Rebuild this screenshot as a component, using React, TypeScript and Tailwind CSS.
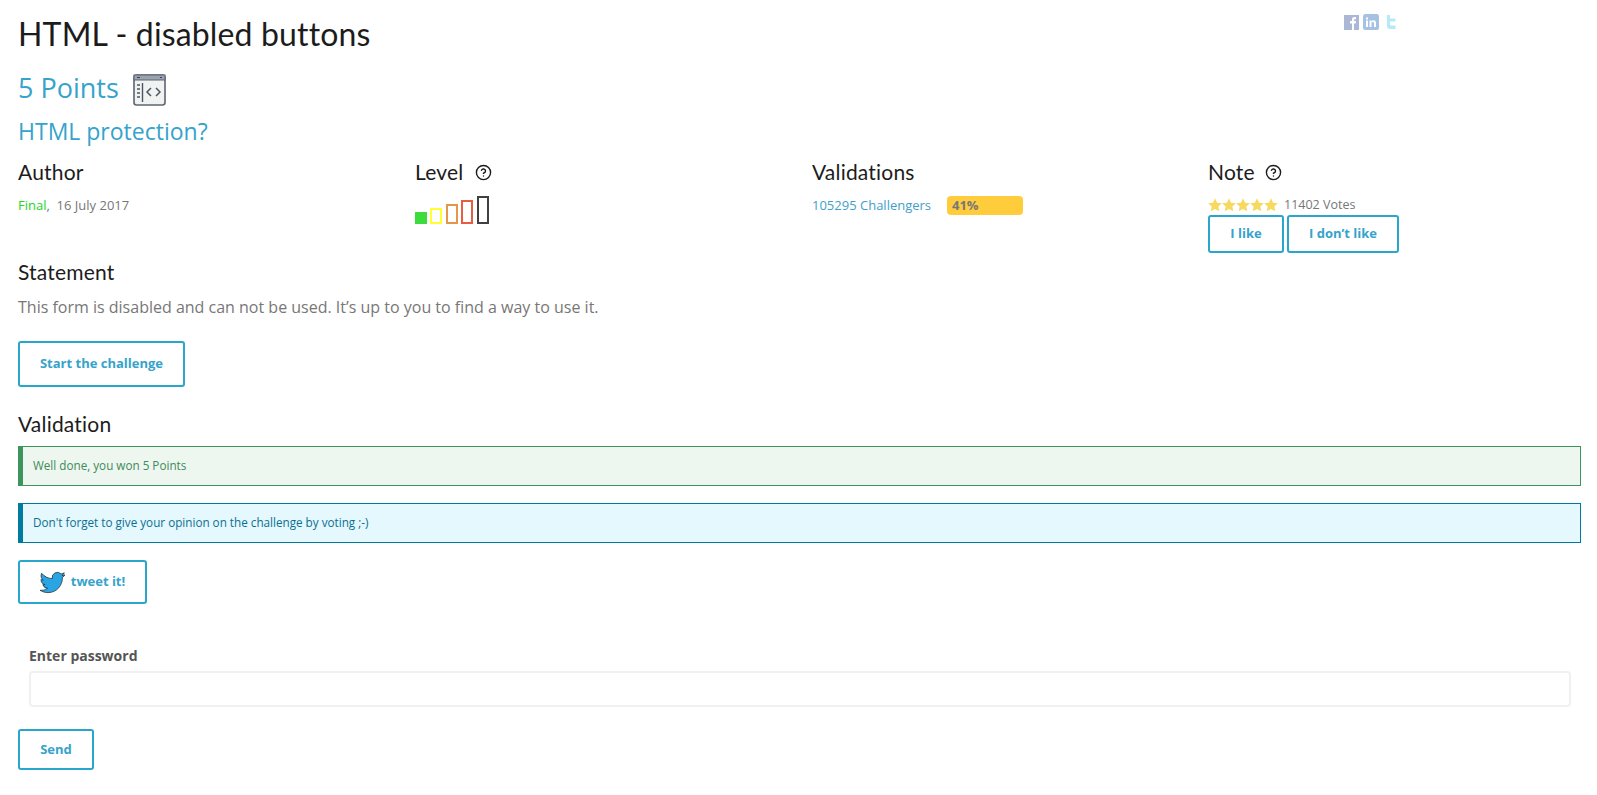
import { CircleHelp } from 'lucide-react';

const twitterPath =
  'M23.95 4.57a10 10 0 0 1-2.82.77 4.96 4.96 0 0 0 2.16-2.72 9.9 9.9 0 0 1-3.12 1.18 4.92 4.92 0 0 0-8.38 4.48A13.98 13.98 0 0 1 1.64 3.16a4.92 4.92 0 0 0 1.52 6.57 4.9 4.9 0 0 1-2.23-.61v.06a4.92 4.92 0 0 0 3.95 4.83 5 5 0 0 1-2.21.08 4.94 4.94 0 0 0 4.6 3.42A9.87 9.87 0 0 1 0 19.54a13.94 13.94 0 0 0 7.55 2.21c9.05 0 14-7.5 14-13.98 0-.21 0-.42-.02-.63a9.94 9.94 0 0 0 2.46-2.55z';

function OutlineButton({ children, className }: { children: React.ReactNode; className: string }) {
  return (
    <button
      className={`flex items-center justify-center rounded-[3px] border-2 border-[#28a6cc] bg-white text-[13px] font-bold text-[#35a3cb] ${className}`}
    >
      {children}
    </button>
  );
}

function SectionTitle({ children, className = '' }: { children: React.ReactNode; className?: string }) {
  return (
    <h3 className={`font-['Lato',sans-serif] text-[21px] leading-[28px] tracking-[0.2px] text-[#1c1c1c] ${className}`}>
      {children}
    </h3>
  );
}

function ChallengeIcon() {
  return (
    <svg width="33" height="32" viewBox="0 0 33 32" className="ml-[14px] mt-[3px]">
      <rect x="1" y="1" width="31" height="30" rx="2.5" fill="#f1f3f2" stroke="#5c6570" strokeWidth="1.6" />
      <rect x="1" y="1" width="31" height="5" fill="#9aa3ad" stroke="#5c6570" strokeWidth="1" />
      <path d="M4 3.5h3M27 3.5h2" stroke="#3c4450" strokeWidth="1" />
      <path d="M9.5 9v19" stroke="#4c5560" strokeWidth="1.4" />
      <path d="M4 11h3M4 15h3M4 19h3M4 23h3" stroke="#4c5560" strokeWidth="1.4" />
      <path d="M18 14l-4 4 4 4M23 14l4 4-4 4" fill="none" stroke="#4c5560" strokeWidth="1.5" />
    </svg>
  );
}

function SocialIcons() {
  return (
    <div className="mr-[198px] mt-[14px] flex h-[16px] items-center gap-[4px]">
      <svg width="15" height="15" viewBox="0 0 15 15" className="opacity-50">
        <rect width="15" height="15" fill="#5a72ab" />
        <path d="M8 15V8.5H6V6h2V4.5C8 2.800 9 2 10.500 2H12v2.300h-1c-.7 0-1 .3-1 1V6h2l-.3 2.500H10V15z" fill="#fff" />
      </svg>
      <svg width="16" height="16" viewBox="0 0 16 16" className="opacity-50">
        <rect width="16" height="16" rx="2.500" fill="#4f86c6" />
        <path d="M3 6.500h2V13H3zM3 3.500h2v2H3zM6.500 6.500h2v1c.5-.8 1.200-1.200 2.200-1.200C12.300 6.300 13 7.300 13 9v4h-2V9.500c0-1-.3-1.500-1.100-1.500-.9 0-1.400.6-1.400 1.600V13h-2z" fill="#fff" />
      </svg>
      <svg width="16" height="16" viewBox="0 0 16 16" className="opacity-50">
        <path d="M4 1h3v3.500h5.500v3H7V10c0 1 .5 1.500 1.500 1.500h4V15H7c-2 0-3-1.500-3-3.500z" fill="#6fd6f5" />
      </svg>
    </div>
  );
}

function LevelBars() {
  return (
    <div className="flex items-end pt-[10px]">
      <div className="h-[12px] w-[12px] bg-[#3ddc3d]" />
      <div className="ml-[3px] h-[16px] w-[12px] border-2 border-[#ffff33]" />
      <div className="ml-[4px] h-[20px] w-[12px] border-2 border-[#e6964a]" />
      <div className="ml-[3px] h-[24px] w-[12px] border-2 border-[#e65c45]" />
      <div className="ml-[4px] h-[28px] w-[12px] border-2 border-[#404040]" />
    </div>
  );
}

function Star() {
  return (
    <svg width="14" height="14" viewBox="0 0 24 24" fill="#f6d95e">
      <path d="M12 .5l3.500 7.500 8.200 1-6 5.700 1.600 8.100L12 18.900l-7.300 3.900 1.600-8.100-6-5.700 8.200-1z" />
    </svg>
  );
}

export default function App() {
  return (
    <div className="min-h-[795px] bg-white pl-[18px] font-['Open_Sans',sans-serif] text-[#777777]">
      <div className="flex justify-between">
        <h1 className="pb-[14px] pt-[14px] font-['Lato',sans-serif] text-[32px] leading-[40px] tracking-[0.15px] text-[#1c1c1c]">
          HTML - disabled buttons
        </h1>
        <SocialIcons />
      </div>

      <h2 className="flex h-[40px] items-center text-[27px] text-[#35a3cb]">
        5 Points
        <ChallengeIcon />
      </h2>
      <h2 className="mt-[7px] text-[23px] leading-[32px] text-[#35a3cb]">HTML protection?</h2>

      <div className="mt-[11px] flex h-[100px]">
        <div className="w-[397px]">
          <SectionTitle>Author</SectionTitle>
          <p className="mt-[9px] text-[13px] leading-[20px]">
            <span className="text-[#22d622]">Final</span>,&nbsp; 16 July 2017
          </p>
        </div>
        <div className="w-[397px]">
          <SectionTitle className="flex items-center gap-[12px]">
            Level <CircleHelp size={17} strokeWidth={2} color="#1c1c1c" />
          </SectionTitle>
          <LevelBars />
        </div>
        <div className="w-[396px]">
          <SectionTitle>Validations</SectionTitle>
          <div className="mt-[10px] flex items-center text-[13px] leading-[19px]">
            <span className="w-[135px] text-[#3f9fca]">105295 Challengers</span>
            <span className="h-[19px] w-[76px] rounded-[4px] bg-[#ffcd3c] pl-[5px] font-bold">41%</span>
          </div>
        </div>
        <div>
          <SectionTitle className="flex items-center gap-[10px]">
            Note <CircleHelp size={17} strokeWidth={2} color="#1c1c1c" />
          </SectionTitle>
          <div className="mt-[9px] flex h-[20px] items-center text-[12.500px]">
            <Star />
            <Star />
            <Star />
            <Star />
            <Star />
            <span className="ml-[6px]">11402 Votes</span>
          </div>
          <div className="flex gap-[3px]">
            <OutlineButton className="h-[38px] w-[76px]">I like</OutlineButton>
            <OutlineButton className="h-[38px] w-[112px]">I don’t like</OutlineButton>
          </div>
        </div>
      </div>

      <SectionTitle>Statement</SectionTitle>
      <p className="mt-[9px] text-[16px] leading-[24px]">
        This form is disabled and can not be used. It’s up to you to find a way to use it.
      </p>
      <OutlineButton className="mt-[22px] h-[46px] w-[167px]">Start the challenge</OutlineButton>

      <SectionTitle className="mt-[23px]">Validation</SectionTitle>

      <div className="mt-[8px] mr-[16px] flex h-[40px] items-center border border-l-[5px] border-[#3d945c] bg-[#edf6ef] pl-[10px] text-[11.700px] text-[#3d8a5a]">
        Well done, you won 5 Points
      </div>
      <div className="mt-[17px] mr-[16px] flex h-[40px] items-center border border-l-[5px] border-[#007ba0] bg-[#e4f8fe] pl-[10px] text-[11.700px] text-[#0a6f8f]">
        Don't forget to give your opinion on the challenge by voting ;-)
      </div>

      <OutlineButton className="mt-[17px] h-[44px] w-[129px] gap-[6px]">
        <svg width="25" height="25" viewBox="0 0 24 24">
          <path d={twitterPath} fill="#2aa5e3" stroke="#111" strokeWidth="0.6" />
        </svg>
        tweet it!
      </OutlineButton>

      <div className="mt-[42px] mr-[26px] pl-[11px]">
        <label className="block text-[14px] font-bold leading-[20px] text-[#555555]">Enter password</label>
        <input className="mt-[5px] block h-[36px] w-full rounded-[4px] border-2 border-[#f0f0f0] bg-white" />
      </div>
      <OutlineButton className="mt-[22px] h-[41px] w-[76px]">Send</OutlineButton>
    </div>
  );
}
